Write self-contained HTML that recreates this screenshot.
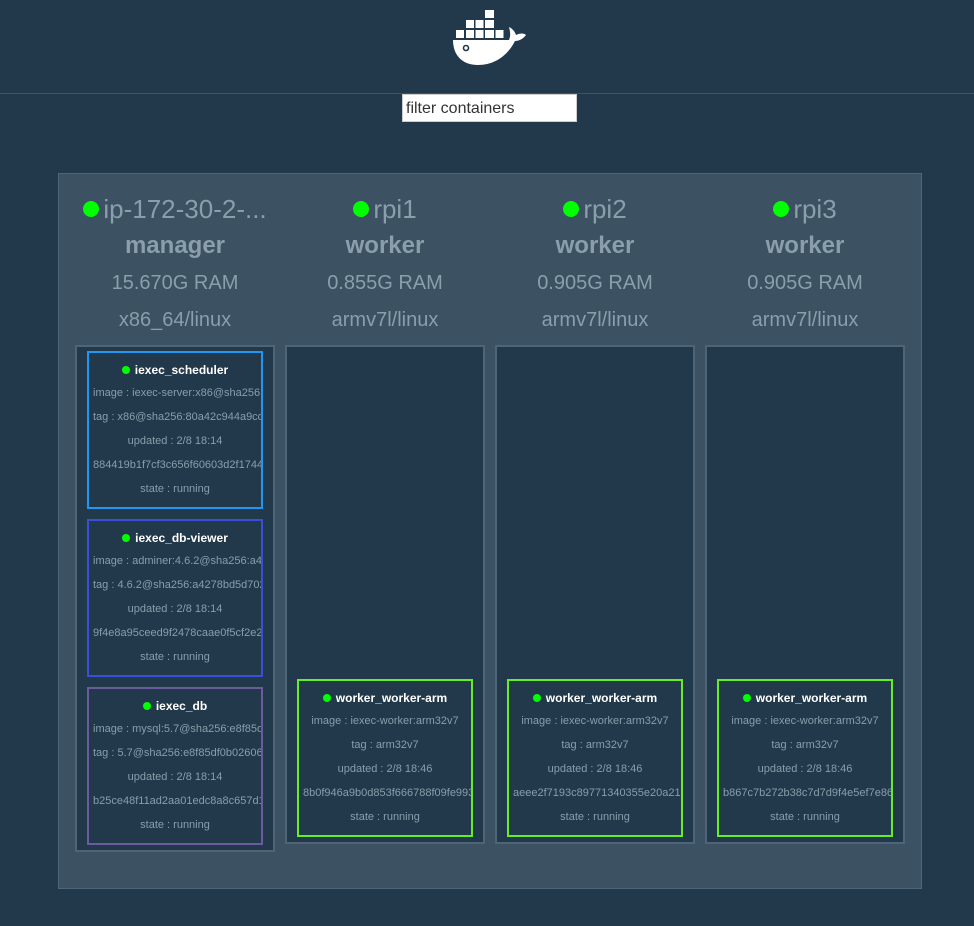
<!DOCTYPE html>
<html><head><meta charset="utf-8"><style>
*{box-sizing:border-box;margin:0;padding:0}
body{width:974px;height:926px;background:#22384b;font-family:"Liberation Sans",sans-serif;position:relative;overflow:hidden}
.hr{position:absolute;left:0;top:93px;width:974px;height:1px;background:#3d5468}
.inp{position:absolute;left:402px;top:94px;width:175px;height:28px;background:#fff;border:1px solid #ccc;font-size:16px;color:#333;padding:4px 3px;line-height:20px}
.panel{position:absolute;left:58px;top:173px;width:864px;height:716px;background:#3c5262;border:1px solid #4d6576}
.hd{position:absolute;top:190px;width:210px;text-align:center;color:#8a9eab}
.hd .n{font-size:26px;height:38px;line-height:38px;white-space:nowrap}
.hd .n i{display:inline-block;width:16px;height:16px;border-radius:50%;background:#00ff00;margin-right:4px;vertical-align:1px}
.hd .r{font-size:24px;font-weight:bold;line-height:36px}
.hd .m{font-size:20px;line-height:36px;padding-top:1px}
.col{position:absolute;background:#22384b;border:2px solid #4d6576}
.card{position:absolute;width:176px;height:158px;border:2px solid;background:#22384b;overflow:hidden;text-align:center;white-space:nowrap;padding:0 4px}
.card .t{color:#fff;font-weight:bold;font-size:12px;margin-top:9px;line-height:16px;margin-bottom:3px}
.card .t i{display:inline-block;width:8px;height:8px;border-radius:50%;background:#00ff00;margin-right:5px;vertical-align:0}
.card .l{color:#8a9eab;font-size:11px;line-height:24px}
</style></head><body>
<svg style="position:absolute;left:440px;top:5px" width="100" height="70" viewBox="0 0 100 70">
<g fill="#fff">
<rect x="45" y="5" width="9" height="8"/>
<rect x="26" y="15" width="8" height="8"/><rect x="35.5" y="15" width="8" height="8"/><rect x="45" y="15" width="9" height="8"/>
<rect x="16" y="25" width="8" height="8"/><rect x="26" y="25" width="8" height="8"/><rect x="35.5" y="25" width="8" height="8"/><rect x="45" y="25" width="9" height="8"/><rect x="55.5" y="25" width="8" height="8"/>
<path d="M13 35 L69 35 C71 30 70 26 69 22 C73 24 75 27 76 30 C80 28 84 28 86 30 C83 34 79 36 75 36 C68 50 55 60 38 60 C22 60 13 50 13 35 Z"/>
</g>
<circle cx="26" cy="43" r="2.5" fill="none" stroke="#22384b" stroke-width="1.6"/>
</svg>
<div class="hr"></div>
<div class="inp">filter containers</div>
<div class="panel"></div>

<div class="hd" style="left:70px"><div class="n"><i></i>ip-172-30-2-...</div><div class="r">manager</div><div class="m">15.670G RAM</div><div class="m">x86_64/linux</div></div>
<div class="hd" style="left:280px"><div class="n"><i></i>rpi1</div><div class="r">worker</div><div class="m">0.855G RAM</div><div class="m">armv7l/linux</div></div>
<div class="hd" style="left:490px"><div class="n"><i></i>rpi2</div><div class="r">worker</div><div class="m">0.905G RAM</div><div class="m">armv7l/linux</div></div>
<div class="hd" style="left:700px"><div class="n"><i></i>rpi3</div><div class="r">worker</div><div class="m">0.905G RAM</div><div class="m">armv7l/linux</div></div>

<div class="col" style="left:75px;top:345px;width:200px;height:507px"></div>
<div class="col" style="left:285px;top:345px;width:200px;height:499px"></div>
<div class="col" style="left:495px;top:345px;width:200px;height:499px"></div>
<div class="col" style="left:705px;top:345px;width:200px;height:499px"></div>

<div class="card" style="left:87px;top:351px;border-color:#2196f3"><div class="t"><i></i>iexec_scheduler</div><div class="l">image : iexec-server:x86@sha256:80a42c944</div><div class="l">tag : x86@sha256:80a42c944a9cd5d</div><div class="l">updated : 2/8 18:14</div><div class="l">884419b1f7cf3c656f60603d2f1744e2</div><div class="l">state : running</div></div>
<div class="card" style="left:87px;top:519px;border-color:#3a4fd8"><div class="t"><i></i>iexec_db-viewer</div><div class="l">image : adminer:4.6.2@sha256:a4278bd</div><div class="l">tag : 4.6.2@sha256:a4278bd5d70282</div><div class="l">updated : 2/8 18:14</div><div class="l">9f4e8a95ceed9f2478caae0f5cf2e226</div><div class="l">state : running</div></div>
<div class="card" style="left:87px;top:687px;border-color:#6a5b9c"><div class="t"><i></i>iexec_db</div><div class="l">image : mysql:5.7@sha256:e8f85df0b</div><div class="l">tag : 5.7@sha256:e8f85df0b02606e5</div><div class="l">updated : 2/8 18:14</div><div class="l">b25ce48f11ad2aa01edc8a8c657d17f</div><div class="l">state : running</div></div>

<div class="card" style="left:297px;top:679px;border-color:#66ee22"><div class="t"><i></i>worker_worker-arm</div><div class="l">image : iexec-worker:arm32v7</div><div class="l">tag : arm32v7</div><div class="l">updated : 2/8 18:46</div><div class="l">8b0f946a9b0d853f666788f09fe9938</div><div class="l">state : running</div></div>
<div class="card" style="left:507px;top:679px;border-color:#66ee22"><div class="t"><i></i>worker_worker-arm</div><div class="l">image : iexec-worker:arm32v7</div><div class="l">tag : arm32v7</div><div class="l">updated : 2/8 18:46</div><div class="l">aeee2f7193c89771340355e20a2199</div><div class="l">state : running</div></div>
<div class="card" style="left:717px;top:679px;border-color:#66ee22"><div class="t"><i></i>worker_worker-arm</div><div class="l">image : iexec-worker:arm32v7</div><div class="l">tag : arm32v7</div><div class="l">updated : 2/8 18:46</div><div class="l">b867c7b272b38c7d7d9f4e5ef7e869</div><div class="l">state : running</div></div>
</body></html>
